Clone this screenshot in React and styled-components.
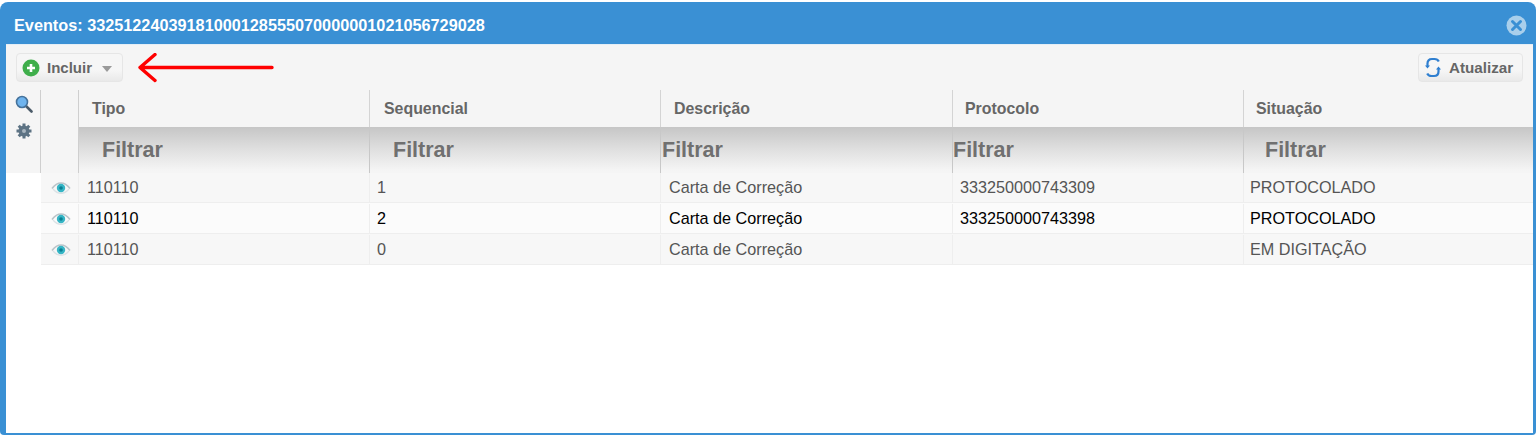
import React from "react";
import styled, { createGlobalStyle } from "styled-components";

const columns = [
	{ title: "Tipo", headPad: 13, filterPad: 23 },
	{ title: "Sequencial", headPad: 14, filterPad: 23 },
	{ title: "Descrição", headPad: 13, filterPad: 1 },
	{ title: "Protocolo", headPad: 12, filterPad: 0 },
	{ title: "Situação", headPad: 12, filterPad: 21 },
];

const cellPads = [8, 7, 8, 7, 6];

const rows = [
	["110110", "1", "Carta de Correção", "333250000743309", "PROTOCOLADO"],
	["110110", "2", "Carta de Correção", "333250000743398", "PROTOCOLADO"],
	["110110", "0", "Carta de Correção", "", "EM DIGITAÇÃO"],
];

const App = () => {
	return (
		<>
			<GlobalStyle />
			<Window>
				<TitleBar>
					<Title>Eventos: 33251224039181000128555070000001021056729028</Title>
					<CloseIcon />
				</TitleBar>
				<Body>
					<Toolbar>
						<ToolButton>
							<PlusIcon />
							<span>Incluir</span>
							<Caret />
						</ToolButton>
						<Arrow />
						<RefreshButton>
							<RefreshIcon />
							<span>Atualizar</span>
						</RefreshButton>
					</Toolbar>
					<Content>
						<SideRail>
							<SearchIcon />
							<GearIcon />
						</SideRail>
						<Table>
							<HeaderRow>
								<EyeHead />
								{columns.map((c) => (
									<HeadCell key={c.title} $pad={c.headPad}>
										{c.title}
									</HeadCell>
								))}
							</HeaderRow>
							<FilterRow>
								<FilterCell />
								{columns.map((c) => (
									<FilterCell key={c.title} $pad={c.filterPad}>
										Filtrar
									</FilterCell>
								))}
							</FilterRow>
							{rows.map((r, i) => (
								<Row key={i} $active={i === 1} $first={i === 0}>
									<EyeCell>
										<EyeIcon />
									</EyeCell>
									{r.map((v, j) => (
										<Cell key={j} $pad={cellPads[j]}>
											{v}
										</Cell>
									))}
								</Row>
							))}
						</Table>
					</Content>
				</Body>
			</Window>
		</>
	);
};

//Icons
const CloseIcon = () => (
	<CloseSvg viewBox="0 0 21 21">
		<circle cx="10.5" cy="10.5" r="10" fill="#a9cfeb" />
		<path d="M6.5 6.5l8 8M14.5 6.5l-8 8" stroke="#3a90d4" strokeWidth="3" strokeLinecap="round" />
	</CloseSvg>
);

const PlusIcon = () => (
	<svg width="18" height="18" viewBox="0 0 18 18">
		<circle cx="9" cy="9" r="8.5" fill="#3fae4b" />
		<path d="M9 5v8M5 9h8" stroke="#fff" strokeWidth="2.6" />
	</svg>
);

const Arrow = () => (
	<ArrowSvg viewBox="0 0 138 30">
		<path d="M135 14.5H4M18 1.5L3 14.5l15 13" fill="none" stroke="#f00" strokeWidth="3.4" strokeLinecap="round" strokeLinejoin="round" />
	</ArrowSvg>
);

const RefreshIcon = () => (
	<svg width="16" height="21" viewBox="0 0 16 21">
		<path d="M2.5 9V6.500C2.500 3.500 4.500 2 7 2h2.500c2 0 3.500.8 4.300 2.500" fill="none" stroke="#2f7fd0" strokeWidth="2.200" />
		<path d="M13.500 12v2.500c0 3-2 4.500-4.500 4.500H6.500c-2 0-3.500-.8-4.300-2.500" fill="none" stroke="#2f7fd0" strokeWidth="2.200" />
		<path d="M0 8.500h5l-2.500 3zM11 12.500h5l-2.500-3z" fill="#2f7fd0" />
	</svg>
);

const SearchIcon = () => (
	<svg width="18" height="18" viewBox="0 0 18 18">
		<path d="M11 11l5.500 5.500" stroke="#4a5a68" strokeWidth="2.600" strokeLinecap="round" />
		<circle cx="7" cy="7" r="5.500" fill="#6fb4ee" stroke="#45729b" strokeWidth="1.600" />
	</svg>
);

const GearIcon = () => (
	<svg width="18" height="18" viewBox="0 0 18 18">
		<path d="M9 1.500v15M1.500 9h15M3.700 3.700l10.600 10.600M14.300 3.700L3.700 14.300" stroke="#5d7384" strokeWidth="3" />
		<circle cx="9" cy="9" r="5.500" fill="#5d7384" />
		<circle cx="9" cy="9" r="2" fill="#a9b6c0" />
	</svg>
);

const EyeIcon = () => (
	<svg width="20" height="14" viewBox="0 0 20 14">
		<path d="M1 7.500C4 3.500 7 2 10 2s6 1.500 9 5.500" fill="none" stroke="#b9c4c9" strokeWidth="1.600" />
		<path d="M2 8c2.500 3 5 4.300 8 4.300S15.500 11 18 8" fill="none" stroke="#dbe2e5" strokeWidth="1.200" />
		<circle cx="10" cy="7" r="4.200" fill="#35b5c5" />
		<circle cx="10" cy="7" r="1.800" fill="#0b7f93" />
	</svg>
);

//Styles
const GlobalStyle = createGlobalStyle`
	html, body {
		margin: 0;
		background: #fff;
	}
	body {
		padding-top: 2px;
		font-family: "Liberation Sans", Arial, sans-serif;
	}
`;

const Window = styled.div`
	width: 1536px;
	height: 433px;
	box-sizing: border-box;
	background: #3a90d4;
	border-radius: 8px 8px 4px 4px;
	display: flex;
	flex-direction: column;
	padding: 0 3px 2px 6px;
`;

const TitleBar = styled.div`
	height: 42px;
	box-sizing: border-box;
	flex: none;
	display: flex;
	align-items: center;
	justify-content: space-between;
	padding: 4px 6px 0 8px;
`;

const Title = styled.div`
	color: #fff;
	font-size: 16.25px;
	font-weight: bold;
`;

const CloseSvg = styled.svg`
	width: 21px;
	height: 21px;
`;

const Body = styled.div`
	flex: 1;
	background: #fff;
	display: flex;
	flex-direction: column;
	border-top: 1px solid #e4eef6;
`;

const Toolbar = styled.div`
	height: 45px;
	box-sizing: border-box;
	flex: none;
	background: #f5f5f5;
	display: flex;
	align-items: flex-start;
	padding: 8px 10px 0 10px;
	position: relative;
`;

const ToolButton = styled.button`
	height: 29px;
	width: 107px;
	box-sizing: border-box;
	display: flex;
	align-items: center;
	padding: 0 0 0 5px;
	border: 1px solid #e6e6e6;
	border-radius: 4px;
	background: linear-gradient(#f6f6f6 60%, #e9e9e9);
	color: #666;
	font-family: inherit;
	font-size: 15px;
	font-weight: bold;
	span {
		margin-left: 7px;
	}
`;

const Caret = styled.i`
	width: 0;
	height: 0;
	margin-left: 10px;
	margin-top: 2px;
	border-left: 5.5px solid transparent;
	border-right: 5.5px solid transparent;
	border-top: 6px solid #9a9a9a;
`;

const RefreshButton = styled(ToolButton)`
	width: 105px;
	margin-left: auto;
	padding-left: 6px;
	font-size: 15.2px;
	span {
		margin-left: 8px;
	}
`;

const ArrowSvg = styled.svg`
	position: absolute;
	left: 131px;
	top: 8px;
	width: 138px;
	height: 30px;
`;

const Content = styled.div`
	flex: 1;
	display: flex;
	align-items: flex-start;
`;

const SideRail = styled.div`
	width: 35px;
	height: 83px;
	box-sizing: border-box;
	flex: none;
	background: #f5f5f5;
	border-right: 1px solid #cfcfcf;
	display: flex;
	flex-direction: column;
	align-items: center;
	gap: 9px;
	padding: 5px 0 0 1px;
`;

const Table = styled.div`
	flex: 1;
	min-width: 0;
`;

const gridColumns = "38px 291px 291px 292px 291px 1fr";

const HeaderRow = styled.div`
	display: grid;
	grid-template-columns: ${gridColumns};
	height: 37px;
	background: #f5f5f5;
`;

const EyeHead = styled.div`
	border-right: 1px solid #cfcfcf;
`;

const HeadCell = styled.div`
	display: flex;
	align-items: center;
	padding-left: ${(p) => p.$pad}px;
	border-right: 1px solid #d4d4d4;
	color: #666;
	font-size: 15.9px;
	font-weight: bold;
	&:last-child {
		border-right: none;
	}
`;

const FilterRow = styled.div`
	display: grid;
	grid-template-columns: ${gridColumns};
	height: 46px;
	background: linear-gradient(#c6c6c6, #e0e0e0 50%, #f5f5f5 95%);
`;

const FilterCell = styled.div`
	display: flex;
	align-items: center;
	padding-left: ${(p) => p.$pad || 0}px;
	border-right: 1px solid #c8c8c8;
	color: #707070;
	font-size: 21.5px;
	font-weight: bold;
	&:first-child {
		background: #f5f5f5;
		border-right-color: #cfcfcf;
	}
	&:last-child {
		border-right: none;
	}
`;

const Row = styled.div`
	display: grid;
	grid-template-columns: ${gridColumns};
	height: ${(p) => (p.$first ? 30 : 31)}px;
	box-sizing: border-box;
	padding-top: ${(p) => (p.$first ? 0 : 1)}px;
	border-bottom: 1px solid #eeeeee;
	background: ${(p) => (p.$active ? "#fbfbfb" : "#f7f7f7")};
	color: ${(p) => (p.$active ? "#000" : "#555")};
`;

const EyeCell = styled.div`
	display: flex;
	align-items: center;
	justify-content: center;
	border-right: 1px solid #eeeeee;
	padding-left: 2px;
`;

const Cell = styled.div`
	display: flex;
	align-items: center;
	padding-left: ${(p) => p.$pad}px;
	border-right: 1px solid #eeeeee;
	font-size: 16.2px;
	&:last-child {
		border-right: none;
	}
`;

export default App;
